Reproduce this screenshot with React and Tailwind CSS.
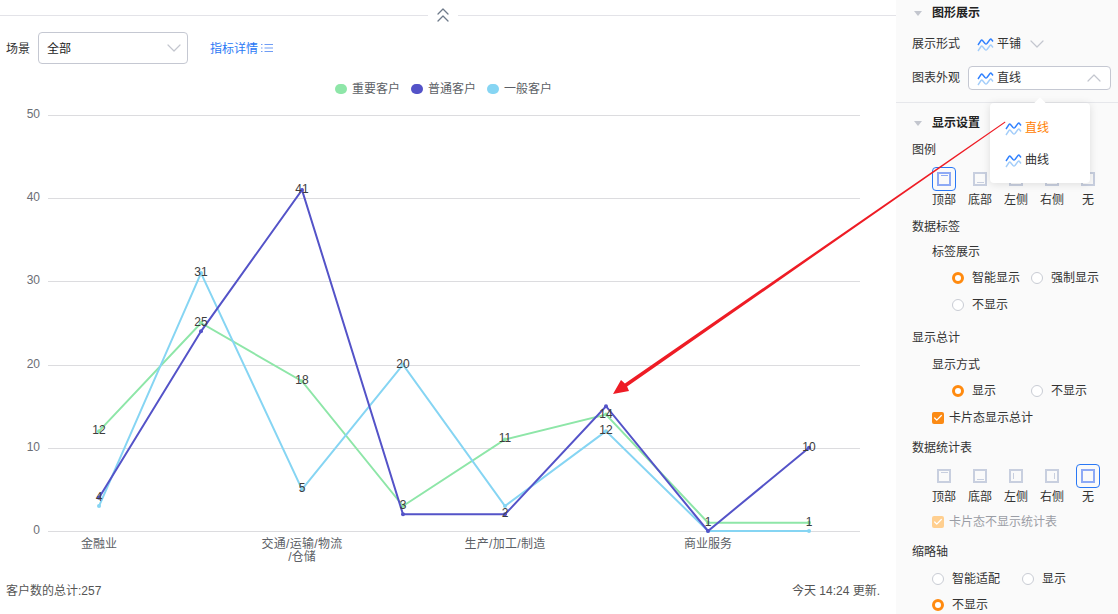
import { ChevronDown, ChevronUp, ChevronsUp, Check } from "lucide-react";

const xs = [99, 201, 302, 403, 505, 606, 708, 809];
const yOf = (v) => 531 - v * 8.32;
const gridRows = [50, 40, 30, 20, 10, 0];

const series = [
  { name: "重要客户", color: "#8ee6a8", data: [12, 25, 18, 3, 11, 14, 1, 1], labels: [12, 25, 18, 3, 11, 14, 1, 1] },
  { name: "一般客户", color: "#86d5f3", data: [3, 31, 5, 20, 3, 12, 0, 0], labels: [null, 31, 5, 20, null, 12, null, null] },
  { name: "普通客户", color: "#5453c8", data: [4, 24, 41, 2, 2, 15, 0, 10], labels: [4, null, 41, null, 2, null, null, 10] },
];

const legend = [
  { name: "重要客户", color: "#8ee6a8" },
  { name: "普通客户", color: "#5453c8" },
  { name: "一般客户", color: "#86d5f3" },
];

function WaveIcon({ className = "w-[17px] h-[15px]" }) {
  return (
    <svg viewBox="0 0 17 15" fill="none" className={`${className} shrink-0`}>
      <path d="M1 8 L4 3.5 Q4.7 2.5 5.5 3.5 L8 6.5 Q9 7.5 10 6.5 L13 2.5 Q13.8 1.5 14.5 2.5 L16 4.5" stroke="#2f80ff" strokeWidth="1.4" />
      <path d="M1 14 L4 9.5 Q4.7 8.5 5.5 9.5 L8 12.5 Q9 13.5 10 12.5 L13 8.5 Q13.8 7.5 14.5 8.5 L16 10.5" stroke="#a3cdfa" strokeWidth="1.4" />
    </svg>
  );
}

function Chart() {
  return (
    <svg width="896" height="468" viewBox="0 100 896 468" className="block shrink-0">
      {gridRows.map((v) => (
        <g key={v}>
          <line x1="48" x2="860" y1={Math.round(yOf(v)) + 0.5} y2={Math.round(yOf(v)) + 0.5} stroke="#dcdcdf" />
          <text x="40" y={yOf(v) + 3} textAnchor="end" fontSize="12" fill="#6b6e75">{v}</text>
        </g>
      ))}
      {series.map((s) => (
        <g key={s.name}>
          <polyline
            points={s.data.map((v, i) => `${xs[i]},${yOf(v)}`).join(" ")}
            fill="none"
            stroke={s.color}
            strokeWidth="2"
          />
          {s.data.map((v, i) => (
            <circle key={i} cx={xs[i]} cy={yOf(v)} r="2" fill={s.color} />
          ))}
        </g>
      ))}
      {series.map((s) =>
        s.labels.map((v, i) =>
          v === null ? null : (
            <text key={s.name + i} x={xs[i]} y={yOf(v) + 3} textAnchor="middle" fontSize="12" fill="#3d3d3d">
              {v}
            </text>
          )
        )
      )}
      <g fontSize="12" fill="#5c5f66" textAnchor="middle">
        <text x="99" y="548">金融业</text>
        <text x="302" y="548" letterSpacing="0.3">交通/运输/物流</text>
        <text x="302" y="561">/仓储</text>
        <text x="505" y="548" letterSpacing="0.3">生产/加工/制造</text>
        <text x="708" y="548">商业服务</text>
      </g>
    </svg>
  );
}

function SectionTitle({ children }) {
  return (
    <div className="flex items-center h-5 pl-[18px] gap-[10px] font-bold text-[#222]">
      <span className="w-0 h-0 border-x-[4px] border-x-transparent border-t-[5px] border-t-[#c3c6ce]" />
      {children}
    </div>
  );
}

function Radio({ on, label, w }) {
  return (
    <div className="flex items-center gap-2 h-5" style={{ width: w }}>
      {on ? (
        <span className="w-3 h-3 rounded-full border-[3px] border-[#ff8a0f] bg-white shrink-0" />
      ) : (
        <span className="w-3 h-3 rounded-full border border-[#c9ccd4] bg-white shrink-0" />
      )}
      <span>{label}</span>
    </div>
  );
}

function PosIcon({ pos, active }) {
  return (
    <div className={`w-6 h-6 flex items-center justify-center rounded-sm ${active ? "border border-[#2a78f5]" : ""}`}>
      <div className={`w-[14px] h-[14px] border-2 flex ${active ? "border-[#8eaaf5]" : "border-[#c8cfdf]"} ${pos === "left" ? "items-center pl-[2px]" : pos === "right" ? "items-center justify-end pr-[2px]" : "justify-center"} ${pos === "top" ? "items-start pt-[1px]" : pos === "bottom" ? "items-end pb-[1px]" : ""}`}>
        {(pos === "top" || pos === "bottom") && <span className={`w-[7px] h-px ${active ? "bg-[#8eaaf5]" : "bg-[#c8cfdf]"}`} />}
        {(pos === "left" || pos === "right") && <span className="w-px h-[6px] bg-[#c8cfdf]" />}
      </div>
    </div>
  );
}

function PosRow({ active }) {
  const items = [["top", "顶部"], ["bottom", "底部"], ["left", "左侧"], ["right", "右侧"], ["none", "无"]];
  return (
    <div className="flex pl-[30px]">
      {items.map(([pos, label]) => (
        <div key={pos} className="w-[36px] flex flex-col items-center">
          <PosIcon pos={pos} active={active === pos} />
          <span className="leading-4 mt-[1px]">{label}</span>
        </div>
      ))}
    </div>
  );
}

function CheckRow({ label, dim }) {
  return (
    <div className={`flex items-center gap-[5px] h-5 pl-[36px] ${dim ? "text-[#9a9da5]" : ""}`}>
      <span className={`w-3 h-3 rounded-[2px] flex items-center justify-center ${dim ? "bg-[#ffcf8f]" : "bg-[#fb8a14]"}`}>
        <Check className="w-[10px] h-[10px] text-white" strokeWidth={3} />
      </span>
      {label}
    </div>
  );
}

function SidePanel() {
  return (
    <div className="relative w-[222px] shrink-0 h-full overflow-hidden bg-[#fafafa] text-xs text-[#333]">
      <div className="h-[103px] border-b border-[#e6e7eb] pt-[3px]">
        <SectionTitle>图形展示</SectionTitle>
        <div className="flex items-center h-5 mt-[11px] pl-4">
          <span className="w-[65px]">展示形式</span>
          <WaveIcon />
          <span className="ml-[3px]">平铺</span>
          <ChevronDown className="w-6 h-6 ml-[4px] text-[#c3c6ce]" strokeWidth={1.2} />
        </div>
        <div className="flex items-center mt-[12px] pl-4">
          <span className="w-[56px]">图表外观</span>
          <div className="w-[143px] h-6 border border-[#c5c8d2] rounded flex items-center pl-2 pr-1 bg-white">
            <WaveIcon />
            <span className="ml-[3px] flex-1">直线</span>
            <ChevronUp className="w-6 h-6 text-[#c3c6ce]" strokeWidth={1.2} />
          </div>
        </div>
      </div>

      <div className="pt-[10px]">
        <SectionTitle>显示设置</SectionTitle>
        <div className="pl-4 h-5 mt-[7px] leading-5">图例</div>
        <div className="mt-[7px]"><PosRow active="top" /></div>
        <div className="pl-4 h-5 leading-5 mt-[9px]">数据标签</div>
        <div className="pl-9 h-5 leading-5 mt-[5px]">标签展示</div>
        <div className="flex pl-[56px] mt-[6px]"><Radio on label="智能显示" w={79} /><Radio label="强制显示" /></div>
        <div className="flex pl-[56px] mt-[7px]"><Radio label="不显示" /></div>
        <div className="pl-4 h-5 leading-5 mt-[13px]">显示总计</div>
        <div className="pl-9 h-5 leading-5 mt-[7px]">显示方式</div>
        <div className="flex pl-[56px] mt-[6px]"><Radio on label="显示" w={79} /><Radio label="不显示" /></div>
        <div className="mt-[7px]"><CheckRow label="卡片态显示总计" /></div>
        <div className="pl-4 h-5 leading-5 mt-[10px]">数据统计表</div>
        <div className="mt-[6px]"><PosRow active="none" /></div>
        <div className="mt-[7px]"><CheckRow label="卡片态不显示统计表" dim /></div>
        <div className="pl-4 h-5 leading-5 mt-[10px]">缩略轴</div>
        <div className="flex pl-9 mt-[7px]"><Radio label="智能适配" w={90} /><Radio label="显示" /></div>
        <div className="flex pl-9 mt-[6px]"><Radio on label="不显示" /></div>
      </div>
    </div>
  );
}

function AppearanceMenu() {
  return (
    <div className="absolute left-[990px] top-[103px] w-[100px] h-[80px] bg-white rounded-sm shadow-[0_1px_8px_rgba(0,0,0,0.12)] text-xs text-[#333] pt-[9px]">
      <span className="absolute -top-[4px] left-[46px] w-2 h-2 rotate-45 bg-white" />
      <div className="flex items-center gap-[3px] h-8 pl-[15px] text-[#ff8000]"><WaveIcon />直线</div>
      <div className="flex items-center gap-[3px] h-8 pl-[15px]"><WaveIcon />曲线</div>
    </div>
  );
}

function RedArrow() {
  return (
    <svg width="1118" height="614" viewBox="0 0 1118 614" className="absolute inset-0 pointer-events-none">
      <polygon points="1005,121.6 1005.4,122.4 627.1,386.6 629,391 613,394 621,380 624.9,383.4" fill="#ee1c25" />
    </svg>
  );
}

export default function App() {
  return (
    <div className="relative w-[1118px] h-[614px] flex overflow-hidden bg-white font-['Liberation_Sans','Noto_Sans_CJK_SC',sans-serif] text-xs">
      <div className="w-[896px] shrink-0 flex flex-col">
        <div className="h-[32px] flex items-start pt-[3px] shrink-0">
          <div className="w-[428px] h-px mt-3 bg-[#e3e3e8]" />
          <ChevronsUp className="w-6 h-6 mx-[3px] text-[#6e7a8a]" strokeWidth={1.3} />
          <div className="flex-1 h-px mt-3 bg-[#e3e3e8]" />
        </div>
        <div className="h-8 flex items-center pl-[6px] shrink-0">
          <span className="text-[#333] w-[32px] pt-[1px]">场景</span>
          <div className="w-[150px] h-8 border border-[#c5c8d2] rounded flex items-center justify-between pl-2 pr-[1px] text-[#222]">
            <span className="pt-[1px]">全部</span>
            <ChevronDown className="w-6 h-6 text-[#c3c6ce]" strokeWidth={1.2} />
          </div>
          <span className="ml-[22px] pt-[1px] text-[#2a78f5]">指标详情</span>
          <svg viewBox="0 0 12 10" className="w-3 h-[10px] ml-[3px]" stroke="#6f9df5" fill="none">
            <path d="M0 1.5h1.5M0 5h1.5M0 8.5h1.5M3.5 1.5H12M3.5 5H12M3.5 8.5H12" />
          </svg>
        </div>
        <div className="h-[33px] flex items-end justify-center gap-[11px] pr-[9px] shrink-0 text-[#5c5f66]">
          {legend.map((l) => (
            <div key={l.name} className="flex items-center gap-[5px] h-[16px]">
              <span className="w-3 h-[10px] rounded-full" style={{ background: l.color }} />
              {l.name}
            </div>
          ))}
        </div>
        <div className="h-[3px] shrink-0" />
        <Chart />
        <div className="flex justify-between items-center pl-[6px] pr-[16px] h-4 mt-[15px] text-[#555]">
          <span>客户数的总计:257</span>
          <span>今天 14:24 更新.</span>
        </div>
      </div>
      <SidePanel />
      <AppearanceMenu />
      <RedArrow />
    </div>
  );
}
